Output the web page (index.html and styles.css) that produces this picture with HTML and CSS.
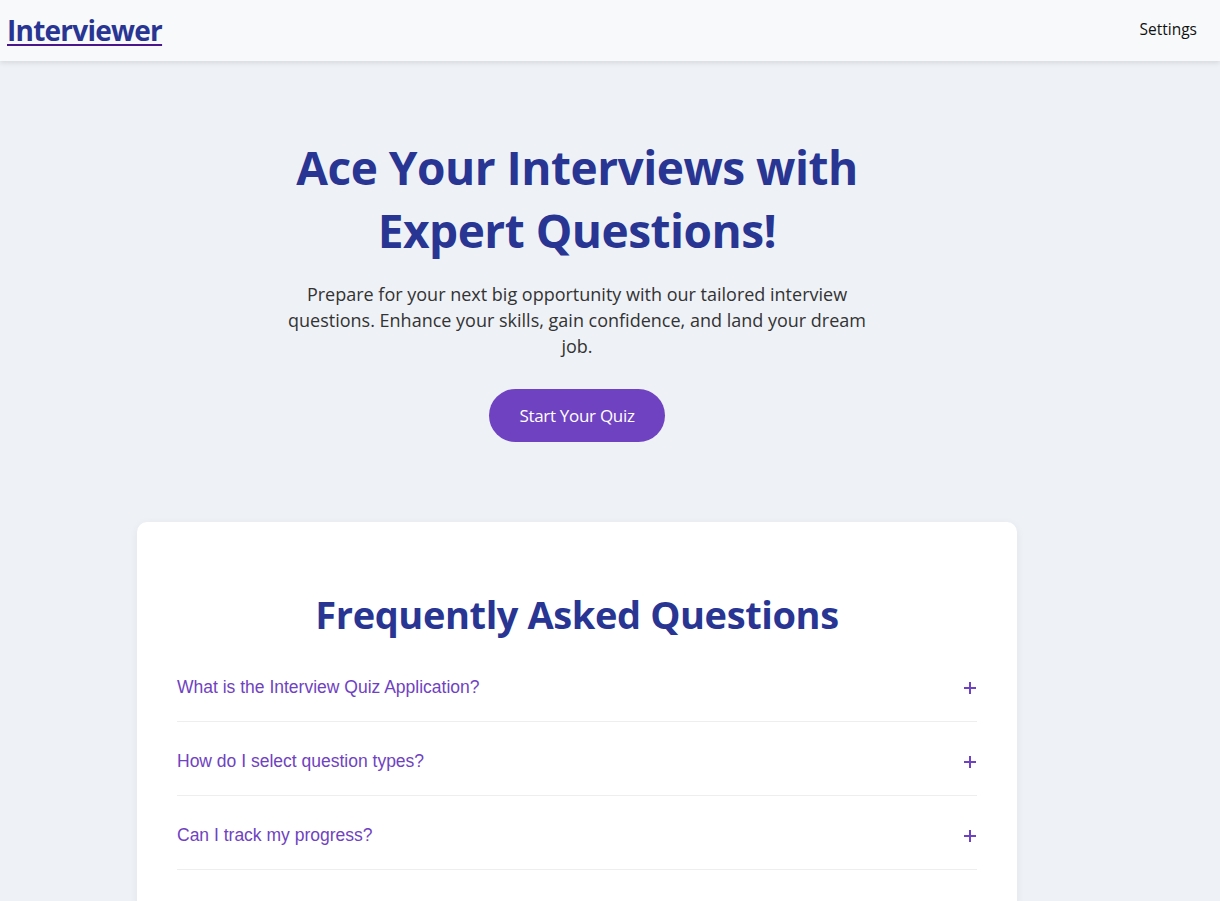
FILE: index.html
```html
<!DOCTYPE html>
<html lang="en">
<head>
<meta charset="utf-8">
<title>Interviewer</title>
<link rel="stylesheet" href="styles.css">
</head>
<body>
<header class="topbar">
  <a class="logo" href="#">Interviewer</a>
  <nav class="nav"><a class="nav-link" href="#">Settings</a></nav>
</header>
<main class="main">
  <section class="hero">
    <h1 class="hero-title">Ace Your Interviews with<br>Expert Questions!</h1>
    <p class="hero-text">Prepare for your next big opportunity with our tailored interview questions. Enhance your skills, gain confidence, and land your dream job.</p>
    <a class="btn" href="#">Start Your Quiz</a>
  </section>
  <section class="faq-card">
    <h2 class="faq-title">Frequently Asked Questions</h2>
    <div class="faq-item">
      <span class="faq-q">What is the Interview Quiz Application?</span>
      <svg class="faq-icon" viewBox="0 0 14 14" width="14" height="14"><path d="M7 1v12M1 7h12" stroke="#6f42c1" stroke-width="2" fill="none"/></svg>
    </div>
    <div class="faq-item">
      <span class="faq-q">How do I select question types?</span>
      <svg class="faq-icon" viewBox="0 0 14 14" width="14" height="14"><path d="M7 1v12M1 7h12" stroke="#6f42c1" stroke-width="2" fill="none"/></svg>
    </div>
    <div class="faq-item">
      <span class="faq-q">Can I track my progress?</span>
      <svg class="faq-icon" viewBox="0 0 14 14" width="14" height="14"><path d="M7 1v12M1 7h12" stroke="#6f42c1" stroke-width="2" fill="none"/></svg>
    </div>
  </section>
</main>
</body>
</html>
```

FILE: styles.css
```css
* { box-sizing: border-box; }
html, body { margin: 0; padding: 0; }
body {
  background: #eef1f6;
  font-family: "Open Sans", "Noto Sans", sans-serif;
  color: #333;
  overflow: hidden;
  height: 901px;
}
.topbar {
  height: 61px;
  background: #f8f9fb;
  box-shadow: 0 2px 5px rgba(0, 0, 0, 0.1);
  display: flex;
  align-items: center;
  justify-content: space-between;
  padding: 0 23px 3px 7px;
  position: relative;
  z-index: 1;
}
.logo {
  font-size: 28px;
  font-weight: 700;
  color: #283593;
  text-decoration: underline;
  text-decoration-color: #4a168c;
  text-decoration-thickness: 2px;
  text-underline-offset: 3px;
  letter-spacing: -0.75px;
  line-height: 1;
  margin-top: 1px;
}
.nav-link {
  color: #111;
  text-decoration: none;
  font-size: 15.5px;
}
.main {
  width: 1154px;
  display: flex;
  flex-direction: column;
  align-items: center;
}
.hero {
  padding-top: 75px;
  display: flex;
  flex-direction: column;
  align-items: center;
  text-align: center;
}
.hero-title {
  margin: 0;
  font-size: 46px;
  line-height: 63px;
  font-weight: 700;
  color: #283593;
  letter-spacing: -0.5px;
}
.hero-text {
  margin: 19px 0 0;
  width: 592px;
  font-size: 18px;
  line-height: 26px;
  color: #333;
  letter-spacing: 0;
}
.btn {
  margin-top: 30px;
  display: inline-block;
  height: 53px;
  line-height: 53px;
  padding: 0 30px;
  border-radius: 27px;
  background: #6f42c1;
  color: #fff;
  text-decoration: none;
  font-size: 17px;
  letter-spacing: -0.3px;
}
.faq-card {
  margin-top: 80px;
  width: 880px;
  background: #fff;
  border-radius: 10px;
  box-shadow: 0 2px 8px rgba(0, 0, 0, 0.06);
  padding: 64px 40px 40px;
}
.faq-title {
  margin: 0 0 6px;
  text-align: center;
  font-size: 38px;
  line-height: 56px;
  font-weight: 700;
  color: #283593;
  letter-spacing: -0.4px;
}
.faq-item {
  display: flex;
  align-items: center;
  justify-content: space-between;
  height: 74px;
  padding-top: 6px;
  border-bottom: 1px solid #eeeeee;
}
.faq-q {
  font-family: "Liberation Sans", Arial, sans-serif;
  font-size: 17.5px;
  color: #6f42c1;
}
.faq-icon { margin-right: 0; }
```
